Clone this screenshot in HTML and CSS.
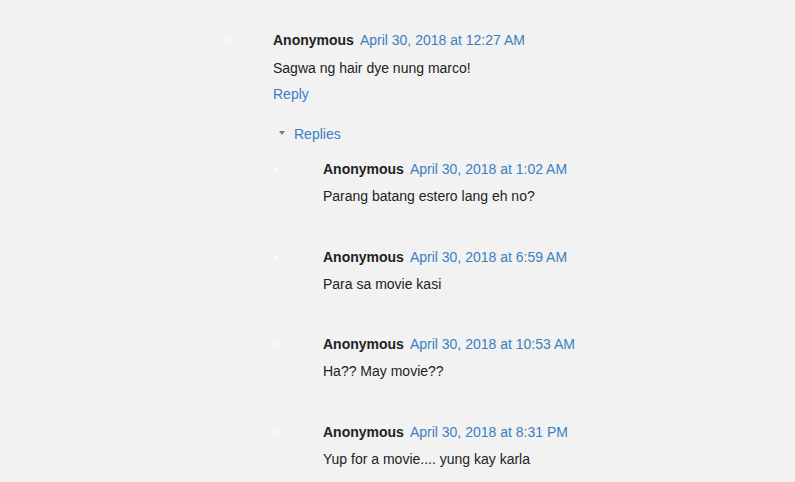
FILE: index.html
```html
<!DOCTYPE html>
<html>
<head>
<meta charset="utf-8">
<link rel="stylesheet" href="styles.css">
</head>
<body>
<div class="comments">
  <div class="comment">
    <div class="avatar"><span class="dot"></span></div>
    <div class="main">
      <div class="header"><span class="author">Anonymous</span><a class="date">April 30, 2018 at 12:27 AM</a></div>
      <div class="text">Sagwa ng hair dye nung marco!</div>
      <div class="reply"><a>Reply</a></div>
      <div class="replies-toggle"><span class="tri"></span><a>Replies</a></div>
      <div class="thread">
        <div class="comment nested">
          <div class="avatar"><span class="dot"></span></div>
          <div class="main">
            <div class="header"><span class="author">Anonymous</span><a class="date">April 30, 2018 at 1:02 AM</a></div>
            <div class="text">Parang batang estero lang eh no?</div>
          </div>
        </div>
        <div class="comment nested">
          <div class="avatar"><span class="dot"></span></div>
          <div class="main">
            <div class="header"><span class="author">Anonymous</span><a class="date">April 30, 2018 at 6:59 AM</a></div>
            <div class="text">Para sa movie kasi</div>
          </div>
        </div>
        <div class="comment nested">
          <div class="avatar"><span class="dot"></span></div>
          <div class="main">
            <div class="header"><span class="author">Anonymous</span><a class="date">April 30, 2018 at 10:53 AM</a></div>
            <div class="text">Ha?? May movie??</div>
          </div>
        </div>
        <div class="comment nested">
          <div class="avatar"><span class="dot"></span></div>
          <div class="main">
            <div class="header"><span class="author">Anonymous</span><a class="date">April 30, 2018 at 8:31 PM</a></div>
            <div class="text">Yup for a movie.... yung kay karla</div>
          </div>
        </div>
      </div>
    </div>
  </div>
</div>
</body>
</html>
```
FILE: styles.css
```css
html, body {
  margin: 0;
  padding: 0;
  background: #f2f2f2;
  height: 100%;
  overflow: hidden;
}
body {
  font-family: "Liberation Sans", Arial, sans-serif;
  font-size: 14px;
  color: #222;
}
.comments {
  padding: 27px 0 0 225px;
}
.comment {
  display: flex;
}
.avatar {
  width: 48px;
  flex: none;
  padding-top: 11px;
}
.dot {
  display: block;
  width: 4px;
  height: 4px;
  background: #fafafa;
}
.main {
  flex: 1;
}
.header {
  height: 26px;
  line-height: 26px;
  white-space: nowrap;
}
.author {
  font-weight: bold;
  color: #222;
  margin-right: 6px;
}
.date, .reply a, .replies-toggle a {
  color: #3b7fc0;
  text-decoration: none;
}
.text {
  margin-top: 2px;
  line-height: 26px;
}
.reply {
  line-height: 26px;
}
.replies-toggle {
  margin-top: 14px;
  line-height: 26px;
  display: flex;
  align-items: center;
  padding-left: 6px;
}
.tri {
  width: 0;
  height: 0;
  border-left: 3.5px solid transparent;
  border-right: 3.5px solid transparent;
  border-top: 4px solid #7a7a7a;
  margin-right: 9px;
  margin-top: -3px;
}
.thread {
  margin-top: 9px;
  margin-left: 2px;
}
.nested {
  margin-bottom: 34.6px;
}
.nested .text {
  margin-top: 1px;
}
```
